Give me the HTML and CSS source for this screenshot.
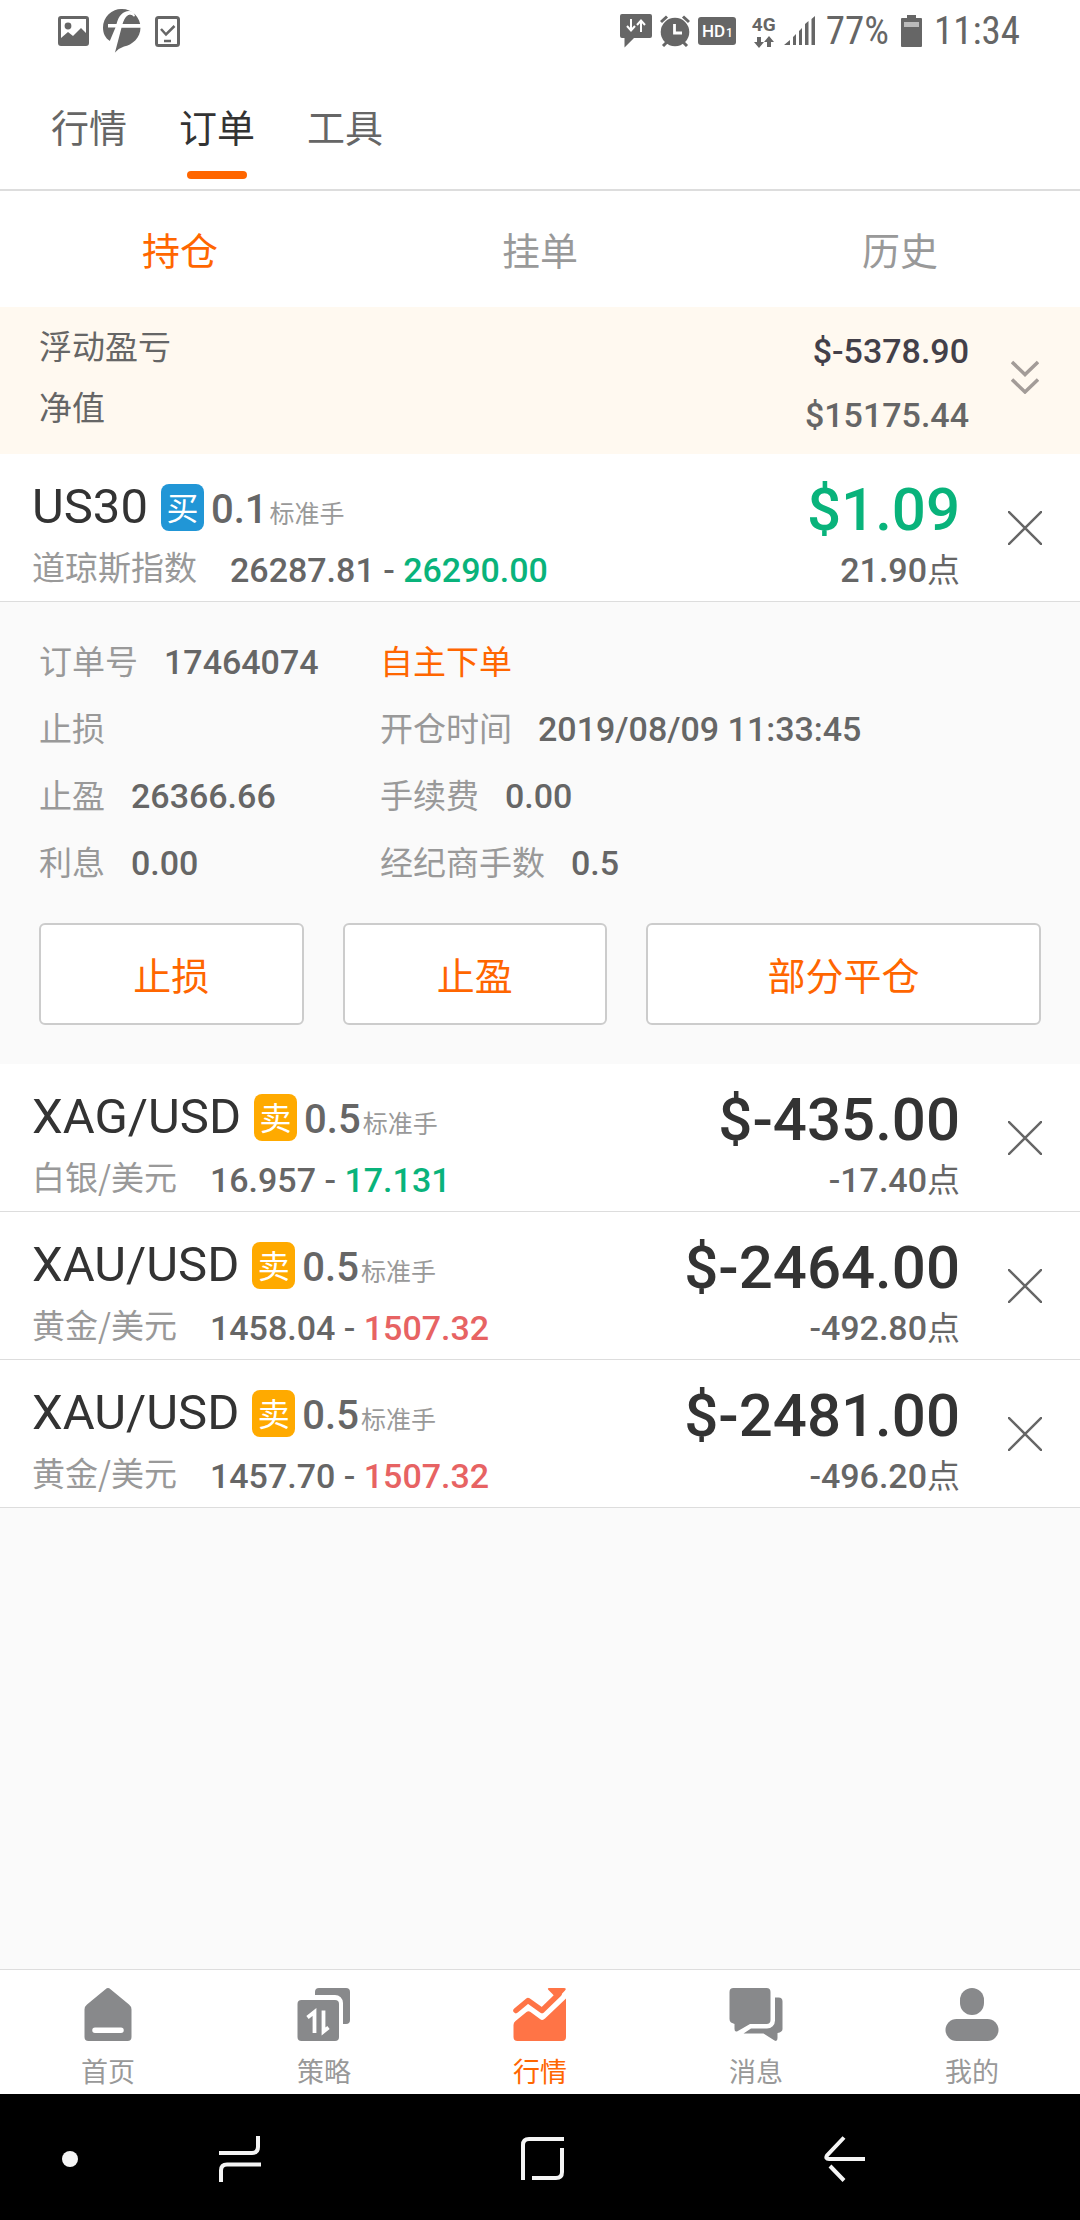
FILE: index.html
```html
<!DOCTYPE html>
<html lang="zh-CN">
<head>
<meta charset="utf-8">
<meta name="viewport" content="width=device-width, initial-scale=1">
<title>订单</title>
<link rel="stylesheet" href="styles.css">
</head>
<body>
<div class="status">
  <div class="status-left">
    <svg width="31" height="30" viewBox="0 0 31 30"><path fill="#666" fill-rule="evenodd" d="M3 0H28a3 3 0 0 1 3 3V27a3 3 0 0 1-3 3H3a3 3 0 0 1-3-3V3a3 3 0 0 1 3-3ZM3 3V22L10 16 15 20 23 12 28 17V3Z"/><circle cx="10" cy="10" r="3.4" fill="#666"/></svg>
    <svg width="38" height="44" viewBox="0 0 38 44"><path fill="#666" d="M19 0A18.500 18.500 0 0 1 37.500 18.500C37.500 29 29 36 21 37.500Q16 39 12 43.500L7 32C2 29 0 24 0 18.500A18.500 18.500 0 0 1 19 0Z"/><path fill="#fff" d="M7 31.500 11 22 12.500 18.500H5V15H13.500C15.500 7 20 2 26 2Q31 2 32 7L30 8C28 4 24 5.500 22 10L20 15H38V18.800H18.500L12 43.500 5 44Z"/><path fill="#666" d="M19.500 15C22 7 27 3 31 8L35 15Z"/></svg>
    <svg width="25" height="31" viewBox="0 0 25 31"><rect x="1.500" y="1.500" width="22" height="28" rx="2" fill="none" stroke="#666" stroke-width="3"/><path d="M6 13 11 18.500 19.500 10" fill="none" stroke="#666" stroke-width="2.500"/><path d="M9 25H16" stroke="#666" stroke-width="2.500"/></svg>
  </div>
  <div class="status-right">
    <svg width="32" height="34" viewBox="0 0 32 34"><path fill="#666" d="M2 0H30a2 2 0 0 1 2 2V22a2 2 0 0 1-2 2H14L4.500 33.500V24H2a2 2 0 0 1-2-2V2a2 2 0 0 1 2-2Z"/><path d="M11 5V16M7 12 11 16.500 15 12M21 18V7M17 11 21 6.500 25 11" fill="none" stroke="#fff" stroke-width="2"/></svg>
    <svg width="30" height="32" viewBox="0 0 30 32"><circle cx="15" cy="17" r="14.300" fill="#666"/><path d="M1 7 7 1.500M23 1.500 29 7M7 27 3 31M23 27 27 31" stroke="#666" stroke-width="3"/><path d="M14.500 9V18H22" fill="none" stroke="#fff" stroke-width="2.800"/></svg>
    <svg width="38" height="28" viewBox="0 0 38 28"><rect width="38" height="28" rx="3" fill="#666"/><text x="4" y="20" class="badge-hd">HD</text><text x="28" y="20" class="badge-one">1</text></svg>
    <div class="net"><span>4G</span><svg width="20" height="12" viewBox="0 0 20 12"><path fill="#666" d="M3 1H7V6H10L5 12 0 6H3ZM13 11H17V6H20L15 0 10 6H13Z"/></svg></div>
    <svg width="31" height="30" viewBox="0 0 31 30"><path fill="#666" d="M0 29 6 24V29ZM9 21 12 18V29H9ZM15 15 18 12V29H15ZM21 8 24.500 5V29H21ZM27.500 3 31 0V29H27.500Z"/></svg>
    <span class="status-text pct">77%</span>
    <svg width="21" height="32" viewBox="0 0 21 32"><path fill="#666" d="M6 0H15V3H20a1 1 0 0 1 1 1V31a1 1 0 0 1-1 1H1a1 1 0 0 1-1-1V4a1 1 0 0 1 1-1H6Z"/><path fill="#bbb" d="M3 7H18V12H3Z"/></svg>
    <span class="status-text">11:34</span>
  </div>
</div>

<nav class="tabs">
  <a href="#quotes">行情</a>
  <a href="#orders" class="active">订单</a>
  <a href="#tools">工具</a>
</nav>

<nav class="subtabs">
  <a href="#open" class="active">持仓</a>
  <a href="#pending">挂单</a>
  <a href="#history">历史</a>
</nav>

<main>
  <section class="summary">
    <div class="summary-labels"><span>浮动盈亏</span><span>净值</span></div>
    <div class="summary-values"><span class="dark">$-5378.90</span><span>$15175.44</span></div>
    <button class="icon-btn expand" aria-label="展开"><svg width="28" height="34" viewBox="0 0 28 34"><path d="M1 2 14 14.500 27 2M1 19.500 14 32 27 19.500" fill="none" stroke="#a39c98" stroke-width="3.500"/></svg></button>
  </section>

  <article class="order">
    <div class="order-main">
      <div class="order-title"><h2>US30</h2><span class="side buy">买</span><span class="lots">0.1</span><small>标准手</small></div>
      <div class="order-sub"><span class="name">道琼斯指数</span><span class="price">26287.81 - <b class="up">26290.00</b></span></div>
    </div>
    <div class="order-pl"><strong class="up">$1.09</strong><span>21.90<i>点</i></span></div>
    <button class="icon-btn" aria-label="平仓"><svg width="34" height="34" viewBox="0 0 34 34"><path d="M0 0 34 34M34 0 0 34" stroke="#666" stroke-width="2.400"/></svg></button>
  </article>

  <section class="detail">
    <dl>
      <div><dt>订单号</dt><dd>17464074</dd></div>
      <div><dt class="source">自主下单</dt></div>
      <div><dt>止损</dt><dd></dd></div>
      <div><dt>开仓时间</dt><dd>2019/08/09 11:33:45</dd></div>
      <div><dt>止盈</dt><dd>26366.66</dd></div>
      <div><dt>手续费</dt><dd>0.00</dd></div>
      <div><dt>利息</dt><dd>0.00</dd></div>
      <div><dt>经纪商手数</dt><dd>0.5</dd></div>
    </dl>
    <div class="actions">
      <button>止损</button>
      <button>止盈</button>
      <button class="wide">部分平仓</button>
    </div>
  </section>

  <article class="order">
    <div class="order-main">
      <div class="order-title"><h2>XAG/USD</h2><span class="side sell">卖</span><span class="lots">0.5</span><small>标准手</small></div>
      <div class="order-sub"><span class="name">白银/美元</span><span class="price">16.957 - <b class="up">17.131</b></span></div>
    </div>
    <div class="order-pl"><strong>$-435.00</strong><span>-17.40<i>点</i></span></div>
    <button class="icon-btn" aria-label="平仓"><svg width="34" height="34" viewBox="0 0 34 34"><path d="M0 0 34 34M34 0 0 34" stroke="#666" stroke-width="2.400"/></svg></button>
  </article>

  <article class="order">
    <div class="order-main">
      <div class="order-title"><h2>XAU/USD</h2><span class="side sell">卖</span><span class="lots">0.5</span><small>标准手</small></div>
      <div class="order-sub"><span class="name">黄金/美元</span><span class="price">1458.04 - <b class="down">1507.32</b></span></div>
    </div>
    <div class="order-pl"><strong>$-2464.00</strong><span>-492.80<i>点</i></span></div>
    <button class="icon-btn" aria-label="平仓"><svg width="34" height="34" viewBox="0 0 34 34"><path d="M0 0 34 34M34 0 0 34" stroke="#666" stroke-width="2.400"/></svg></button>
  </article>

  <article class="order">
    <div class="order-main">
      <div class="order-title"><h2>XAU/USD</h2><span class="side sell">卖</span><span class="lots">0.5</span><small>标准手</small></div>
      <div class="order-sub"><span class="name">黄金/美元</span><span class="price">1457.70 - <b class="down">1507.32</b></span></div>
    </div>
    <div class="order-pl"><strong>$-2481.00</strong><span>-496.20<i>点</i></span></div>
    <button class="icon-btn" aria-label="平仓"><svg width="34" height="34" viewBox="0 0 34 34"><path d="M0 0 34 34M34 0 0 34" stroke="#666" stroke-width="2.400"/></svg></button>
  </article>
</main>

<nav class="bottom">
  <a href="#home"><svg width="54" height="53" viewBox="0 0 54 53"><path fill="#88898b" fill-rule="evenodd" d="M24.500 1.200Q27 -1 29.500 1.200L48 16.500Q50.500 18.500 50.500 21.500V49a4 4 0 0 1-4 4H7.500a4 4 0 0 1-4-4V21.500Q3.500 18.500 6 16.500ZM14 39.500a2.750 2.750 0 0 0 0 5.500H40a2.750 2.750 0 0 0 0-5.500Z"/></svg>首页</a>
  <a href="#strategy"><svg width="54" height="53" viewBox="0 0 54 53"><g fill="#88898b"><rect x="0.500" y="12" width="41.500" height="41" rx="4"/><path d="M18 7V4a4 4 0 0 1 4-4H49a4 4 0 0 1 4 4V32a4 4 0 0 1-4 4H46V15a8 8 0 0 0-8-8Z"/></g><path d="M10.500 29.500 17.500 24V45M26.500 22.500V43.500L31.500 39.500" fill="none" stroke="#fff" stroke-width="3.800"/></svg>策略</a>
  <a href="#market" class="active"><svg width="54" height="53" viewBox="0 0 54 53"><path fill="#ff7446" d="M.500 37Q.500 34.500 2.500 33L13.500 24Q15.500 22.500 17.500 24L27 31Q29.500 33 32 30.500L53 10.500V49a4 4 0 0 1-4 4H4.500a4 4 0 0 1-4-4Z"/><path d="M3 22.500 15 12.500 29 22.500 46 6" fill="none" stroke="#ff7446" stroke-width="5.500" stroke-linecap="round" stroke-linejoin="round"/><path fill="#ff7446" d="M36 0H51Q54 0 52 2.500L44 11 39 5.500 35.500 2Q34 0 36 0Z"/></svg>行情</a>
  <a href="#messages"><svg width="54" height="53" viewBox="0 0 54 53"><path fill="#88898b" d="M4.500 0H37.500a4 4 0 0 1 4 4V32a4 4 0 0 1-4 4H21L8 43.500Q5.500 44 5.500 41V36L2 34.500Q.500 33.500.500 31V4a4 4 0 0 1 4-4ZM46 9.500H49.500a4 4 0 0 1 4 4V41Q53.500 44 48.500 45V50Q48.500 54 45.500 52.500L34.500 45.500H14.500L22 40.500H38a8 8 0 0 0 8-8Z"/></svg>消息</a>
  <a href="#me"><svg width="54" height="53" viewBox="0 0 54 53"><g fill="#88898b"><rect x="15" y="0" width="24" height="27" rx="12"/><rect x=".500" y="31" width="53" height="22" rx="11"/></g></svg>我的</a>
</nav>

<div class="system">
  <span class="dot"></span>
  <button aria-label="最近任务"><svg width="42" height="46" viewBox="0 0 42 46"><path d="M0 17H33Q39 17 39 11V0M42 28.500H8Q2 28.500 2 34.500V46" fill="none" stroke="#f5f5f5" stroke-width="4"/></svg></button>
  <button aria-label="主屏幕"><svg width="44" height="44" viewBox="0 0 44 44"><path d="M2 43V8Q2 2 8 2H43M41 11V35Q41 41 35 41H11" fill="none" stroke="#f5f5f5" stroke-width="4"/></svg></button>
  <button aria-label="返回"><svg width="42" height="46" viewBox="0 0 42 46"><path d="M20 1.500 3 19.500Q1 23 5 23H41M6 30 20 44.500" fill="none" stroke="#f5f5f5" stroke-width="4"/></svg></button>
</div>
</body>
</html>
```

FILE: styles.css
```css
* { box-sizing: border-box; margin: 0; padding: 0; }

body {
  display: flex;
  flex-direction: column;
  min-height: 100vh;
  background: #fafafa;
  color: #666;
  font-family: "Noto Sans CJK SC", sans-serif;
  font-size: 33px;
}

a { color: inherit; text-decoration: none; }
button { border: 0; background: none; font: inherit; color: inherit; }
svg { display: block; flex: none; }

/* status bar */
.status {
  display: flex;
  justify-content: space-between;
  height: 62px;
  padding: 0 60px 0 58px;
  background: #fff;
}
.status-left, .status-right { display: flex; align-items: center; }
.status-left { gap: 14px; }
.status-right { gap: 8px; }
.status-text { font: 39px/64px "Roboto Condensed", Roboto, sans-serif; }
.pct { margin: 0 4px 0 3px; }
.status-text:last-child { margin-left: 4px; }
.badge-hd { font: 500 17px Roboto, sans-serif; fill: #fff; }
.badge-one { font: 500 12px Roboto, sans-serif; fill: #fff; }
.net {
  display: flex;
  flex-direction: column;
  align-items: center;
  margin-left: 8px;
  font: 700 19px/22px Roboto, sans-serif;
}

/* page tabs */
.tabs {
  display: flex;
  gap: 52px;
  padding: 0 51px;
  height: 129px;
  border-bottom: 2px solid #ddd;
  background: #fff;
  font-size: 38px;
  line-height: 127px;
}
.tabs a { position: relative; }
.tabs .active { color: #333; }
.tabs .active::after {
  content: "";
  position: absolute;
  left: 8px;
  right: 8px;
  bottom: 10px;
  height: 8px;
  border-radius: 4px;
  background: #f60;
}

.subtabs {
  display: flex;
  background: #fff;
  color: #999;
  font-size: 38px;
  line-height: 116px;
}
.subtabs a { flex: 1; text-align: center; }
.subtabs .active { color: #f60; }

main { flex: 1; }

/* account summary */
.summary {
  display: flex;
  height: 147px;
  padding-left: 39px;
  background: #fff9f0;
}
.summary-labels, .summary-values { display: flex; flex-direction: column; }
.summary-labels { flex: 1; padding-top: 8px; line-height: 61px; }
.summary-values {
  padding-top: 12px;
  text-align: right;
  font: 500 34px/64px Roboto, sans-serif;
}
.dark { color: #434049; }

.icon-btn {
  display: flex;
  align-items: center;
  justify-content: center;
  width: 111px;
}
.expand { padding-bottom: 8px; }

/* order rows */
.order {
  display: flex;
  height: 148px;
  padding-left: 32px;
  border-bottom: 1px solid #ddd;
  background: #fff;
}
.order-main { flex: 1; padding-top: 20px; }
.order-title { display: flex; align-items: baseline; height: 66px; }
.order-title h2 { color: #333; font: 400 49px/66px Roboto, sans-serif; }
.side {
  align-self: center;
  width: 43px;
  height: 47px;
  margin: 0 7px 0 13px;
  border-radius: 8px;
  color: #fff;
  font-size: 32px;
  line-height: 45px;
  text-align: center;
}
.buy { background: #2196d6; }
.sell { background: #fa0; }
.lots { font: 500 40px/48px Roboto, sans-serif; }
.order-title small { margin-left: 2px; color: #999; font-size: 25px; line-height: 32px; }
.order-sub { display: flex; gap: 33px; }
.name { color: #999; line-height: 52px; }
.price { font: 500 34px/61px Roboto, sans-serif; }
.price b { font-weight: 500; }
.up, .order-pl .up { color: #09b37b; }
.down { color: #e76363; }

.order-pl {
  display: flex;
  flex-direction: column;
  margin-right: 9px;
  padding-top: 20px;
  text-align: right;
  font: 500 34px/48px Roboto, sans-serif;
}
.order-pl strong { color: #333; font-size: 60px; font-weight: 500; line-height: 72px; }
.order-pl i { font: 400 33px/40px "Noto Sans CJK SC", sans-serif; }

/* expanded order */
.detail { padding: 25px 39px 39px; }
.detail dl { display: grid; grid-template-columns: 341px 1fr; }
.detail dl div { display: flex; gap: 26px; height: 67px; }
.detail dt { color: #999; line-height: 66px; }
.detail .source { color: #f60; }
.detail dd { font: 500 34px/71px Roboto, sans-serif; }
.actions { display: flex; gap: 39px; margin-top: 28px; }
.actions button {
  flex: 2 1 0;
  height: 102px;
  padding-bottom: 2px;
  border: 2px solid #ccc;
  border-radius: 6px;
  background: #fff;
  color: #f60;
  font-size: 38px;
}
.actions .wide { flex-grow: 3; }

/* app navigation */
.bottom {
  display: flex;
  height: 125px;
  border-top: 1px solid #ddd;
  background: #fff;
  color: #999;
  font-size: 27px;
  line-height: 40px;
}
.bottom a {
  display: flex;
  flex: 1;
  flex-direction: column;
  align-items: center;
  gap: 10px;
  padding-top: 18px;
}
.bottom .active { color: #f60; }

/* system keys */
.system {
  display: grid;
  grid-template-columns: 89px repeat(3, 28%);
  align-items: center;
  height: 126px;
  padding-top: 4px;
  background: #000;
}
.system button { display: flex; justify-content: center; }
.dot {
  justify-self: end;
  width: 16px;
  height: 16px;
  margin-right: 11px;
  border-radius: 50%;
  background: #f5f5f5;
}
```
